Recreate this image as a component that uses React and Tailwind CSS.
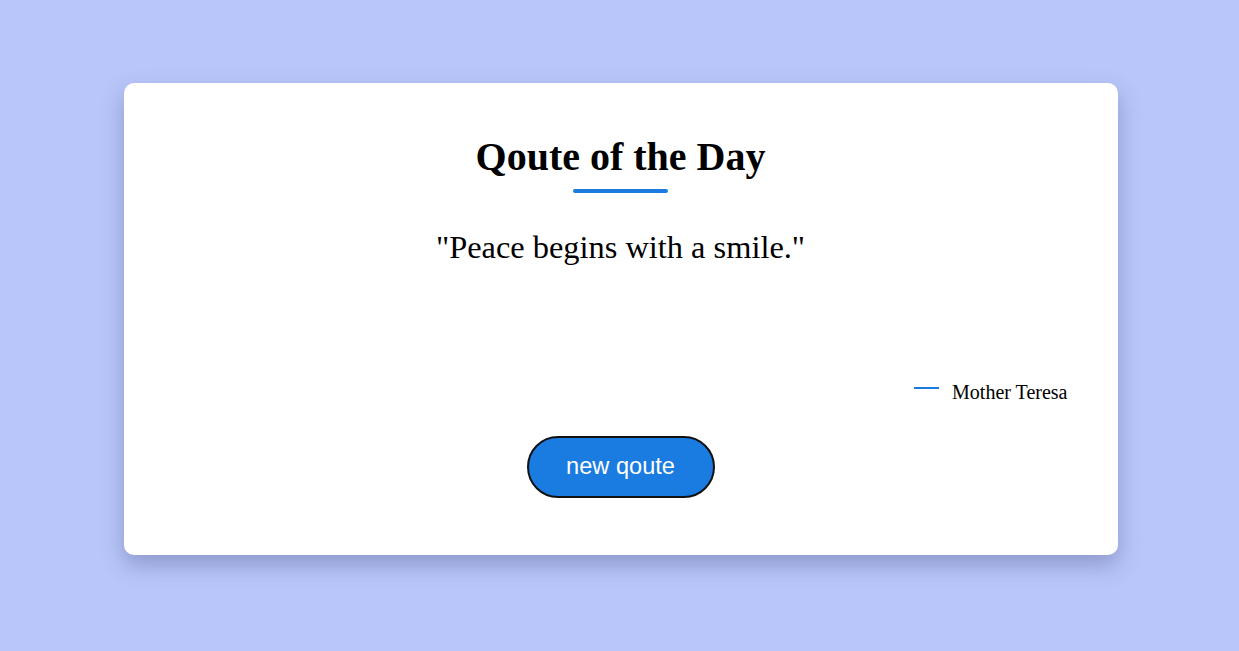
import React from 'react';

const App = () => {
  return (
    <div className="min-h-screen w-full bg-[#b9c6f9] flex justify-center pt-[83px] pl-[2px] font-['Liberation_Serif','Times_New_Roman',serif]">
      {/* Quote card */}
      <div className="w-[994px] h-[472px] bg-white rounded-[10px] shadow-[0_10px_22px_rgba(60,70,120,0.35)] flex flex-col items-center pt-[54px] px-[50px]">
        <h1 className="text-[40px] leading-[40px] font-bold text-black">Qoute of the Day</h1>
        <div className="w-[95px] h-[4px] rounded-full bg-[#1a7be0] mt-[12px]"></div>

        <p className="text-[32.4px] leading-[32px] text-black mt-[38px]">"Peace begins with a smile."</p>

        {/* Author */}
        <div className="w-full flex justify-end items-start mt-[119px]">
          <span className="w-[25px] h-[2px] bg-[#1a7be0] mr-[13px] mt-[5px]"></span>
          <span className="text-[20px] leading-[20px] text-black">Mother Teresa</span>
        </div>

        <button className="mt-[34px] w-[188px] h-[62px] rounded-full border-2 border-[#111] bg-[#1a7be0] text-white text-[23.6px] font-['Liberation_Sans',Arial,sans-serif]">
          new qoute
        </button>
      </div>
    </div>
  );
};

export default App;
